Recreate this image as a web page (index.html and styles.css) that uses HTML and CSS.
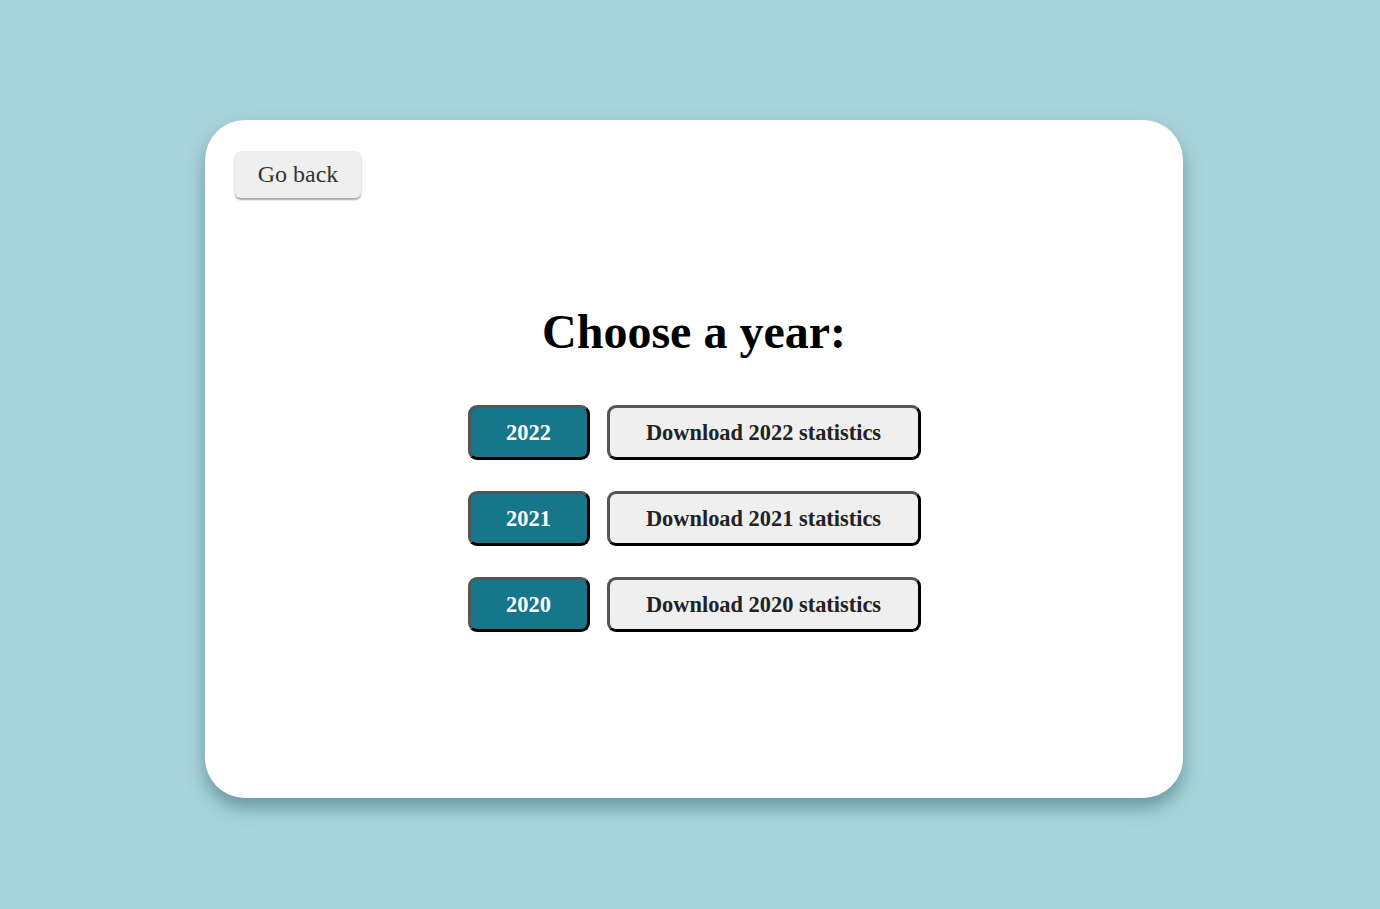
FILE: index.html
```html
<!DOCTYPE html>
<html>
<head>
<meta charset="utf-8">
<link rel="stylesheet" href="styles.css">
</head>
<body>
<main class="card">
  <div class="top">
    <button class="back">Go back</button>
  </div>
  <h1 class="title">Choose a year:</h1>
  <div class="rows">
    <div class="row">
      <button class="year">2022</button>
      <button class="dl">Download 2022 statistics</button>
    </div>
    <div class="row">
      <button class="year">2021</button>
      <button class="dl">Download 2021 statistics</button>
    </div>
    <div class="row">
      <button class="year">2020</button>
      <button class="dl">Download 2020 statistics</button>
    </div>
  </div>
</main>
</body>
</html>
```
FILE: styles.css
```css
html, body {
  margin: 0;
  padding: 0;
  background: #a9d4dc;
  height: 100%;
}
body {
  font-family: "Liberation Serif", "Times New Roman", serif;
  padding-top: 120px;
  padding-left: 205px;
  box-sizing: border-box;
}
.card {
  width: 978px;
  height: 678px;
  background: #ffffff;
  border-radius: 40px;
  box-shadow: 0 10px 18px rgba(60, 100, 110, 0.55);
  box-sizing: border-box;
  padding: 31px 30px 0 30px;
  display: flex;
  flex-direction: column;
}
.top {
  display: flex;
}
.back {
  font-family: "Liberation Serif", "Times New Roman", serif;
  font-size: 24px;
  color: #333;
  background: #efefef;
  border: none;
  border-radius: 6px;
  width: 126px;
  height: 47px;
  box-shadow: 0 2px 2px rgba(0, 0, 0, 0.35);
  padding: 0;
}
.title {
  margin: 106px 0 0 0;
  text-align: center;
  font-size: 48px;
  font-weight: bold;
  line-height: 56px;
  color: #000;
}
.rows {
  margin-top: 45px;
  display: flex;
  flex-direction: column;
  align-items: center;
  gap: 31px;
}
.row {
  display: flex;
  gap: 17px;
}
.year, .dl {
  font-family: "Liberation Serif", "Times New Roman", serif;
  font-size: 22.4px;
  font-weight: bold;
  height: 55px;
  border-radius: 9px;
  border: 3px solid #555;
  border-right-color: #000;
  border-bottom-color: #000;
  padding: 0;
  box-sizing: border-box;
}
.year {
  width: 122px;
  background: #16768a;
  color: #fff;
}
.dl {
  width: 314px;
  background: #efefef;
  color: #222;
}
```
